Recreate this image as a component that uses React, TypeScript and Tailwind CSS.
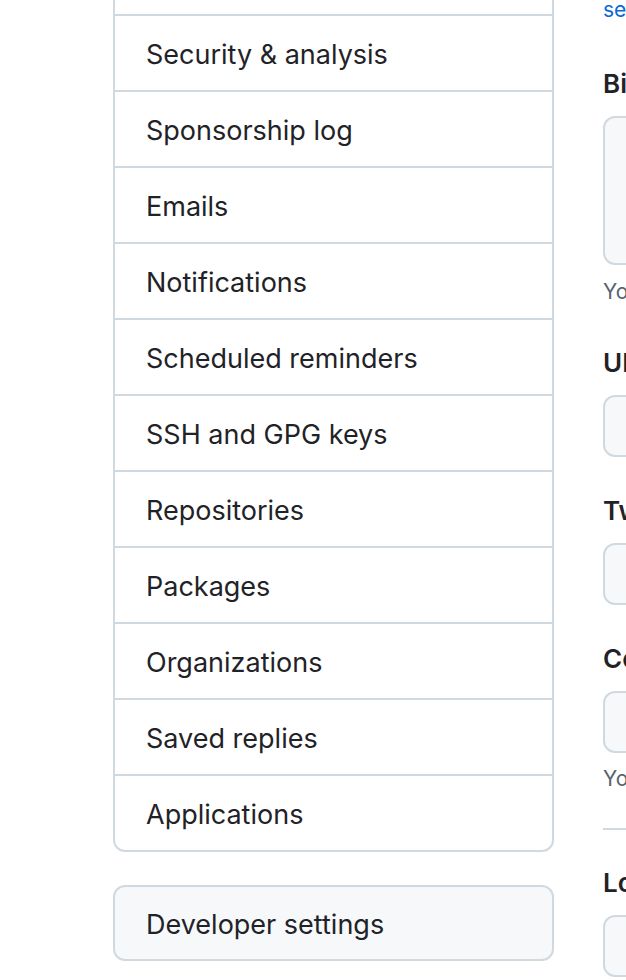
import React from 'react'

const navItems = [
  'Security log',
  'Security & analysis',
  'Sponsorship log',
  'Emails',
  'Notifications',
  'Scheduled reminders',
  'SSH and GPG keys',
  'Repositories',
  'Packages',
  'Organizations',
  'Saved replies',
  'Applications',
]

function Label({ children }: { children: React.ReactNode }) {
  return <div className="text-[26px] leading-[32px] font-semibold text-[#1f2328] whitespace-nowrap">{children}</div>
}

function Input({ tall }: { tall?: boolean }) {
  return (
    <div
      className={`mt-[16px] w-[560px] rounded-[12px] border-2 border-[#d1d9e0] bg-[#f6f8fa] ${
        tall ? 'h-[149px]' : 'h-[62px]'
      }`}
    />
  )
}

function Note({ children }: { children: React.ReactNode }) {
  return <div className="text-[21px] leading-[30px] text-[#59636e] whitespace-nowrap">{children}</div>
}

export default function App() {
  return (
    <div
      className="w-[626px] h-[980px] overflow-hidden bg-white"
      style={{ fontFamily: 'Inter, "Noto Sans", sans-serif' }}
    >
      <div className="flex items-start pl-[113px] gap-[49px]">
        <div className="w-[441px] shrink-0 mt-[-64px]">
          <nav className="rounded-b-[12px] border-2 border-[#d1d9e0] overflow-hidden">
            {navItems.map((item, i) => (
              <div
                key={item}
                className={`h-[76px] flex items-center pt-[4px] pl-[31px] pr-[32px] text-[27px] text-[#1f2328] ${
                  i > 0 ? 'border-t-2 border-[#d1d9e0]' : ''
                }`}
              >
                {item}
              </div>
            ))}
          </nav>
          <div className="mt-[33px] h-[76px] rounded-[12px] border-2 border-[#d1d9e0] bg-[#f6f8fa] flex items-center pt-[4px] pl-[31px] pr-[32px] text-[27px] text-[#1f2328]">
            Developer settings
          </div>
        </div>

        <div className="w-[600px] shrink-0 mt-[-5px]">
          <div className="text-[21px] leading-[30px] text-[#0969da] whitespace-nowrap">settings.</div>

          <div className="mt-[43px]">
            <Label>Bio</Label>
            <Input tall />
          </div>
          <div className="mt-[12px]">
            <Note>You can @mention other users and organizations to link to them.</Note>
          </div>

          <div className="mt-[40px]">
            <Label>URL</Label>
            <Input />
          </div>

          <div className="mt-[38px]">
            <Label>Twitter username</Label>
            <Input />
          </div>

          <div className="mt-[38px]">
            <Label>Company</Label>
            <Input />
          </div>
          <div className="mt-[11px]">
            <Note>You can @mention your company's GitHub organization to link it.</Note>
          </div>

          <div className="mt-[34px] h-[2px] w-[560px] bg-[#d1d9e0]" />

          <div className="mt-[37px]">
            <Label>Location</Label>
            <Input />
          </div>
        </div>
      </div>
    </div>
  )
}
